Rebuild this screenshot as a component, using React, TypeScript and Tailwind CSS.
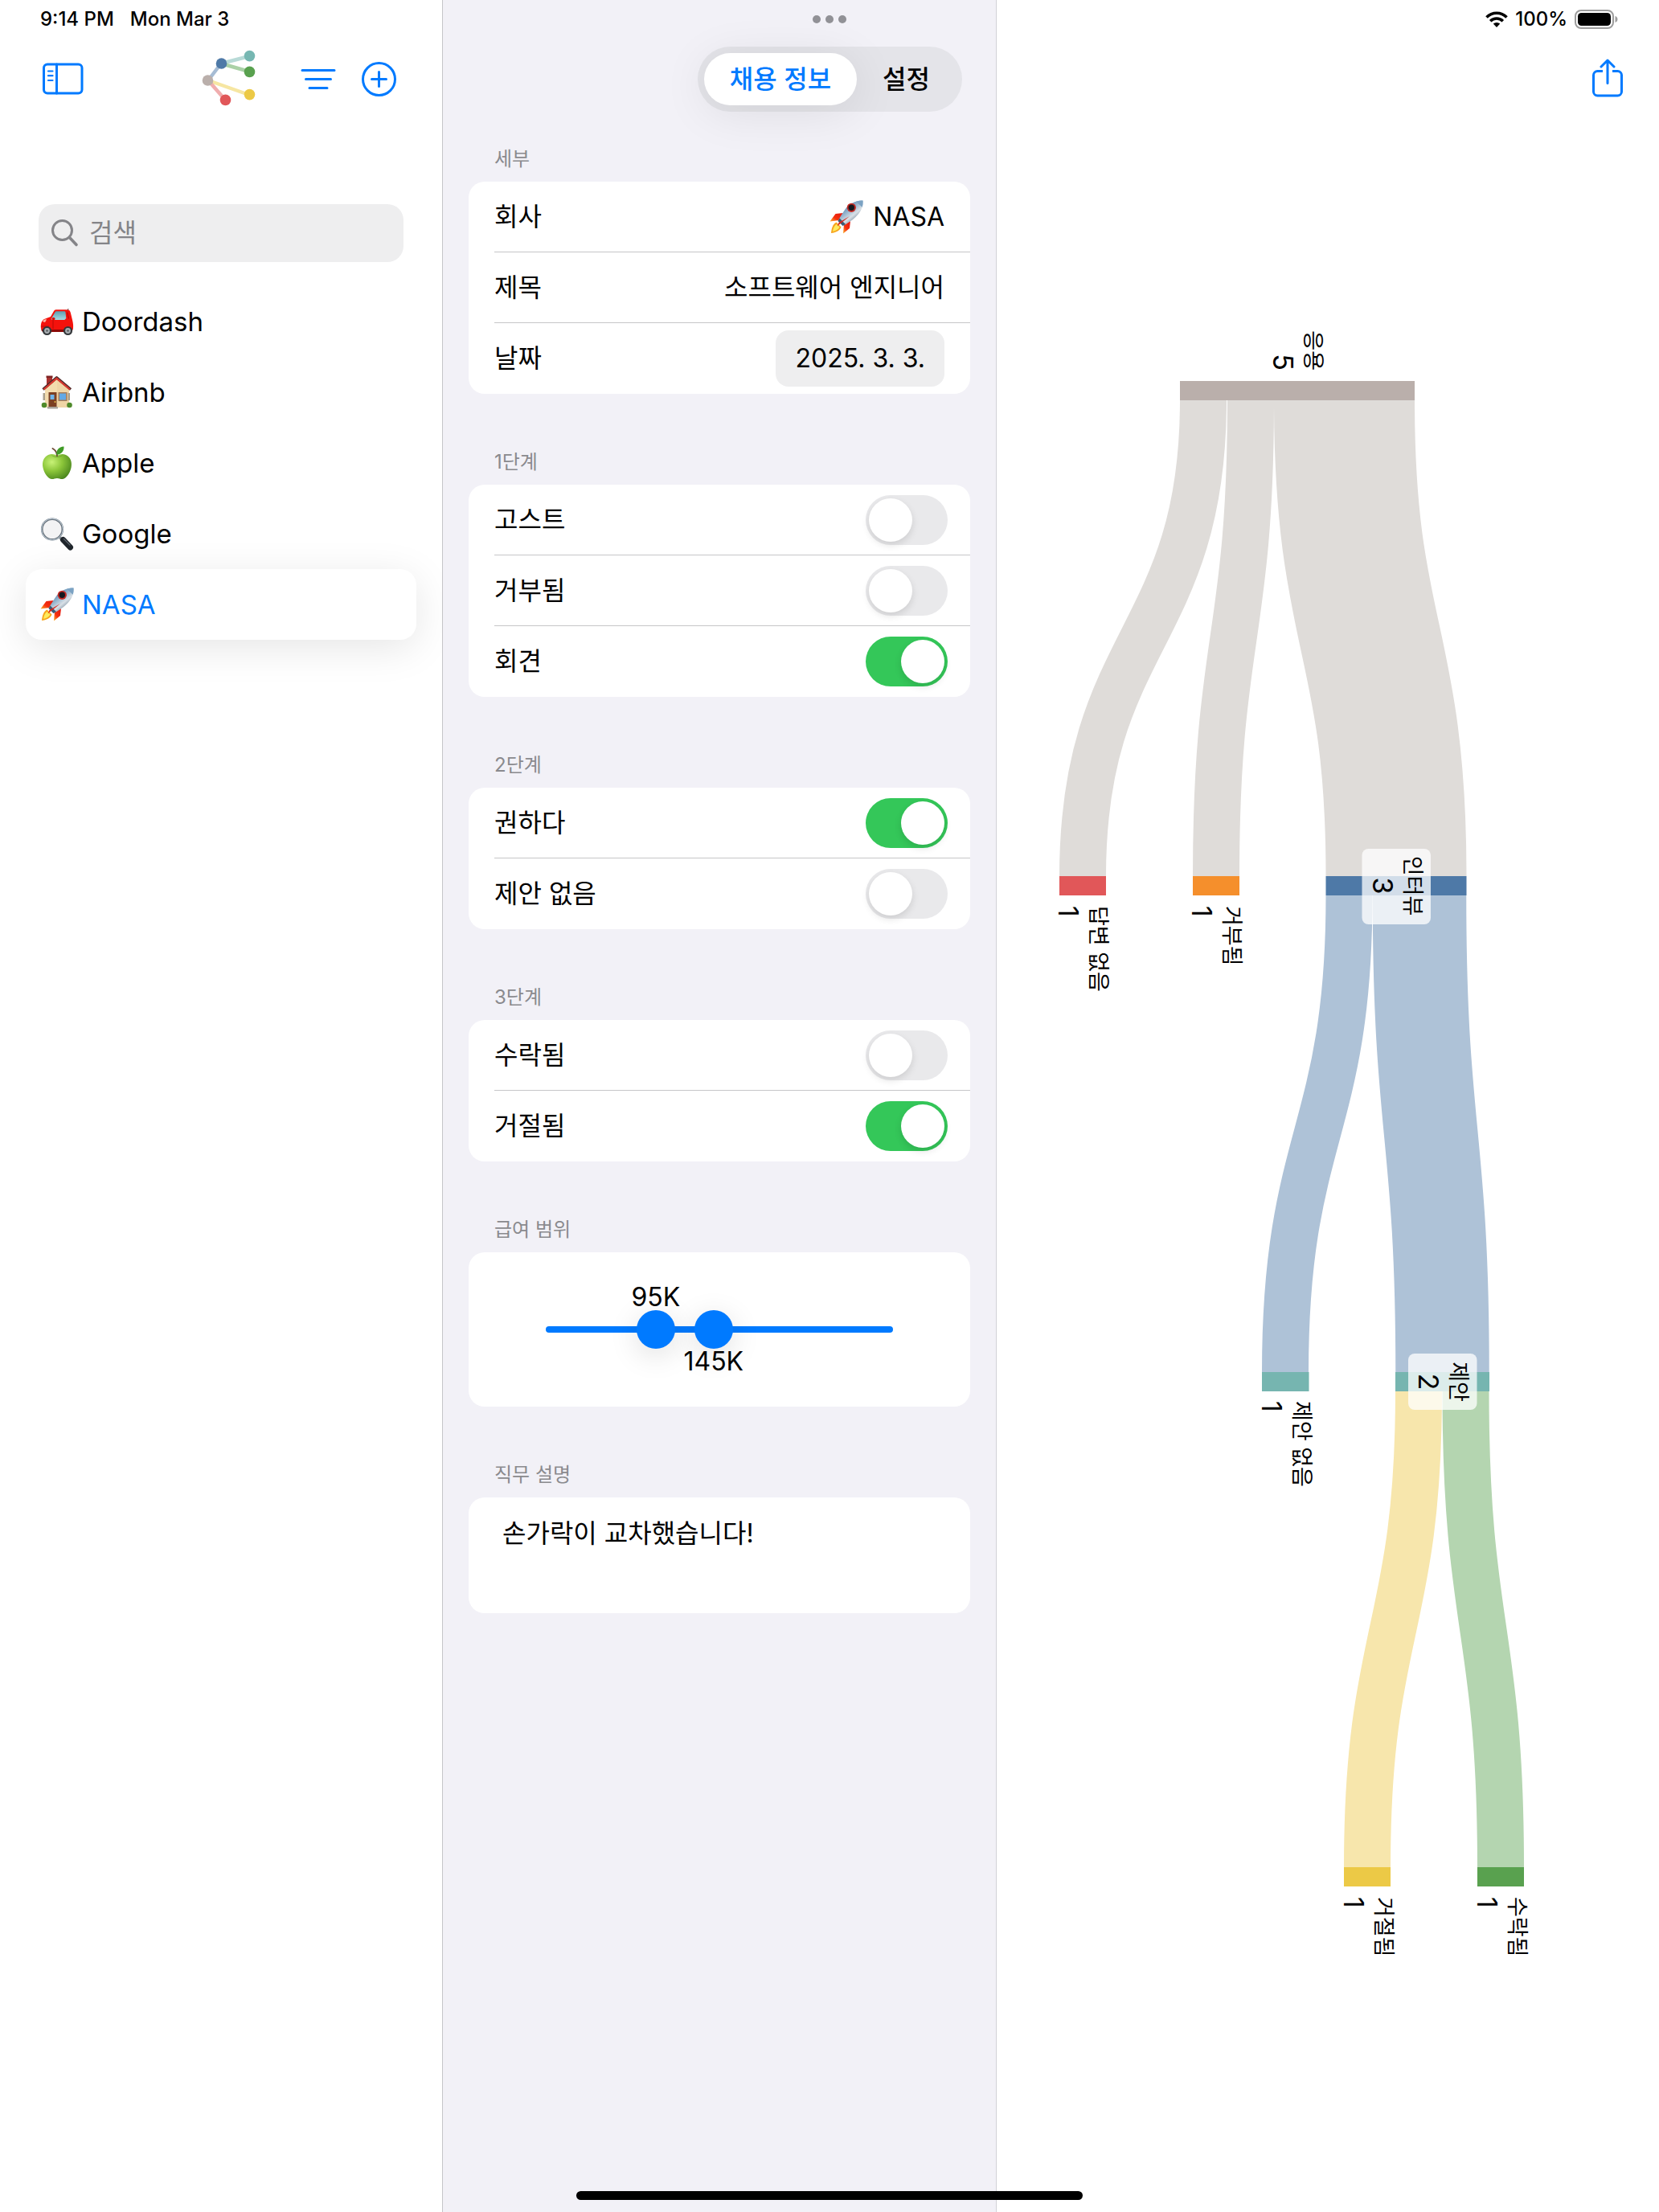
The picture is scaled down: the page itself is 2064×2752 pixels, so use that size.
import React, { useState } from "react";

type IconProps = { className?: string };

function CarIcon({ className }: IconProps) {
  return (
    <svg viewBox="0 0 42 42" className={className} aria-hidden="true">
      <defs>
        <linearGradient id="carGlass" x1="0" y1="0" x2="0" y2="1">
          <stop offset="0" stopColor="#5f9fb0" />
          <stop offset="1" stopColor="#a5dbe4" />
        </linearGradient>
      </defs>
      <path d="M35 5l-1 3" stroke="#444" strokeWidth="1" />
      <path
        d="M1 30c-.6-6 .6-10 4-12l8-3 4-7c1-1.600 2-1.800 4-1.800h12c3 0 4 1 4.800 3.800l2.200 9c1 4 1.500 8 .8 12l-1.800 2H3z"
        fill="#f4120c"
      />
      <path d="M13.500 18l5-8.500c.6-1 1-1.200 2-1.200h9.500c1 0 1.300.5 1.500 1.500l.8 7.200-2 2H15z" fill="url(#carGlass)" />
      <path d="M33.500 9.500l2 8" stroke="#c20a06" strokeWidth="1.400" fill="none" />
      <path d="M3 21c1-2 3-3 5-2.500l-2 3.500z" fill="#f9b9a8" />
      <path d="M16 19v11M1 27h10" stroke="#b90b07" strokeWidth="1" fill="none" />
      <rect x="14.500" y="16" width="4" height="3" rx="1.500" fill="#d70d08" />
      <path d="M1 31h39l-2 3H3z" fill="#8d0907" />
      <circle cx="8.500" cy="32.500" r="5.600" fill="#33373a" />
      <circle cx="8.500" cy="32.500" r="3.400" fill="#a9aeb2" />
      <circle cx="8.500" cy="32.500" r="1.300" fill="#55595c" />
      <circle cx="34.500" cy="32.500" r="5.600" fill="#33373a" />
      <circle cx="34.500" cy="32.500" r="3.400" fill="#a9aeb2" />
      <circle cx="34.500" cy="32.500" r="1.300" fill="#55595c" />
    </svg>
  );
}

function HouseIcon({ className }: IconProps) {
  return (
    <svg viewBox="0 0 42 42" className={className} aria-hidden="true">
      <rect x="8" y="1" width="7" height="12" fill="#a83230" />
      <rect x="7.500" y="0.500" width="8" height="2.500" fill="#7c2322" />
      <path d="M6 16L21 3l15 13v24H6z" fill="#f3dcae" />
      <path d="M21 3l15 13v24H21z" fill="#ecd0a0" opacity=".6" />
      <path d="M3.500 17.500L20.500 2.800 38 17.500" fill="none" stroke="#4a2a2a" strokeWidth="3.400" strokeLinejoin="round" />
      <path d="M4.500 17.500L20.500 3.800 37 17.500" fill="none" stroke="#d8382f" strokeWidth="2.200" />
      <rect x="10.500" y="21" width="10" height="19" fill="#7b3f22" />
      <rect x="12.500" y="24" width="5" height="6" fill="#6db4ea" />
      <circle cx="18.500" cy="33" r="1" fill="#e8c04a" />
      <rect x="22.500" y="21" width="11" height="11" fill="#a67c58" />
      <rect x="24" y="22.500" width="8" height="8" fill="#62a9e6" />
      <rect x="3.500" y="22" width="2.500" height="9" fill="#a9a08e" />
      <rect x="34.500" y="22" width="2.500" height="9" fill="#a9a08e" />
      <rect x="9" y="39" width="13" height="2.500" fill="#a8a39b" />
      <circle cx="5" cy="37" r="3.300" fill="#4f8a2b" />
      <circle cx="36.500" cy="37" r="3.300" fill="#4f8a2b" />
    </svg>
  );
}

function AppleIcon({ className }: IconProps) {
  return (
    <svg viewBox="0 0 42 42" className={className} aria-hidden="true">
      <defs>
        <radialGradient id="appleSkin" cx=".32" cy=".32" r=".8">
          <stop offset="0" stopColor="#c8f277" />
          <stop offset=".45" stopColor="#8cc63a" />
          <stop offset="1" stopColor="#44801b" />
        </radialGradient>
      </defs>
      <path
        d="M21 12c3-2 7-3 11-1 6 3 8 9 6.500 16-1.500 7-6 13-10.500 14-2.500.5-4-1-7-1s-4.500 1.500-7 1C9.500 40 5 34 3.500 27 2 20 4 14 10 11c4-2 8-1 11 1z"
        fill="url(#appleSkin)"
      />
      <path d="M14 11c3 2.500 11 2.500 14 0-2 4-12 4-14 0z" fill="#5d9a24" opacity=".7" />
      <path d="M21 12c0-4-2-7-5.500-9" fill="none" stroke="#6d4a34" strokeWidth="2" strokeLinecap="round" />
      <path d="M20.500 11C19.500 5 23 1 29.500.5 30 6 26.500 10 20.500 11z" fill="#3f9b26" />
    </svg>
  );
}

function MagnifierIcon({ className }: IconProps) {
  return (
    <svg viewBox="0 0 42 42" className={className} aria-hidden="true">
      <path d="M24 25l4 4" stroke="#8f959b" strokeWidth="3.500" />
      <path d="M28.500 28.500l9 9.500" stroke="#20262c" strokeWidth="7" strokeLinecap="round" />
      <path d="M29.500 27.500l7.500 7.500" stroke="#5b646c" strokeWidth="1.300" strokeLinecap="round" />
      <circle cx="15" cy="15.500" r="12.800" fill="#f3f3f4" stroke="#6b757e" strokeWidth="2.600" />
      <circle cx="15" cy="15.500" r="13.400" fill="none" stroke="#c5d3df" strokeWidth="1" />
    </svg>
  );
}

function RocketIcon({ className }: IconProps) {
  return (
    <svg viewBox="0 0 42 42" className={className} aria-hidden="true">
      <defs>
        <linearGradient id="rocketBody" x1=".2" y1=".1" x2=".75" y2=".8">
          <stop offset="0" stopColor="#3f6f9c" />
          <stop offset=".4" stopColor="#8fb0cb" />
          <stop offset=".7" stopColor="#d9e0e6" />
          <stop offset="1" stopColor="#6c8397" />
        </linearGradient>
        <linearGradient id="rocketFin" x1="1" y1="0" x2="0" y2="1">
          <stop offset="0" stopColor="#e3170f" />
          <stop offset=".6" stopColor="#f5310f" />
          <stop offset="1" stopColor="#fdb932" />
        </linearGradient>
      </defs>
      <path d="M17 16L7.500 17 .5 26.500 12 25z" fill="url(#rocketFin)" />
      <path d="M26 26l-1 9-8 6.500L18 30z" fill="url(#rocketFin)" />
      <path d="M8.500 27.500C4 30 2.500 35 2 41c5.500-.5 11-3 12.500-7.500z" fill="#f7a51c" />
      <path d="M8.500 30C6 32 4.500 35 4 39c4-.8 7-2.500 8.500-5.500z" fill="#fdec5e" />
      <path d="M41.500.6C34 0 26 3.500 20.500 10 17 14.500 13.500 20.500 10.500 26l6 6c5.500-3 11.500-6.500 16-11C39 15 42.300 8 41.500.6z" fill="url(#rocketBody)" />
      <path d="M33 1.800C36 1 39 .5 41.500.6c.2 3 0 5.500-.8 8.200z" fill="#7ba2c3" />
      <path d="M12.500 22.500l7.500 7.500-3.500 2-6-6z" fill="#3c5a74" />
      <path d="M25 20L9.500 32.500l2-4.500z" fill="#d8261b" />
      <circle cx="27.300" cy="9.300" r="5.600" fill="#c32a24" />
      <circle cx="27.300" cy="9.300" r="3.700" fill="#14181f" />
    </svg>
  );
}

function SidebarIcon() {
  return (
    <svg viewBox="0 0 52 40" className="h-10 w-[52px]" fill="none" stroke="currentColor" strokeLinecap="round" aria-hidden="true">
      <rect x="2.500" y="2" width="47.500" height="36" rx="4.500" strokeWidth="3" />
      <path d="M18.500 2v36" strokeWidth="3" />
      <path d="M8 10.500h5.500M8 16.200h5.500M8 22h5.500" strokeWidth="2.200" />
    </svg>
  );
}

function AppLogo() {
  return (
    <svg viewBox="250 62 70 74" className="h-[74px] w-[70px]" role="img" aria-label="Logo">
      <g strokeWidth="4.500" strokeLinecap="round">
        <path d="M259 101L275 80" stroke="#a6bcd4" />
        <path d="M275 80L310 71" stroke="#b8dad7" />
        <path d="M275 80L310 90" stroke="#aad1a7" />
        <path d="M259 101L310 119" stroke="#f6e6a2" />
        <path d="M259 101L280 125" stroke="#f0adae" />
      </g>
      <circle cx="258.500" cy="101" r="6.800" fill="#baafab" />
      <circle cx="275.500" cy="80" r="6.800" fill="#4e79a7" />
      <circle cx="310.500" cy="70.600" r="6.800" fill="#76b7b2" />
      <circle cx="310.500" cy="90.400" r="6.800" fill="#59a14f" />
      <circle cx="310.500" cy="118.600" r="6.800" fill="#ecc946" />
      <circle cx="280.500" cy="125.400" r="6.800" fill="#e15759" />
    </svg>
  );
}

function FilterIcon() {
  return (
    <svg viewBox="0 0 46 46" className="size-[46px]" fill="none" stroke="currentColor" strokeWidth="3" strokeLinecap="round" aria-hidden="true">
      <path d="M4 12.500h40M8.500 23.500h31M13 34.500h22" />
    </svg>
  );
}

function PlusCircleIcon() {
  return (
    <svg viewBox="0 0 46 46" className="size-[46px]" fill="none" stroke="currentColor" strokeWidth="3" strokeLinecap="round" aria-hidden="true">
      <circle cx="23.500" cy="23.500" r="20" />
      <path d="M23.500 14.500v18M14.500 23.500h18" />
    </svg>
  );
}

function SearchIcon() {
  return (
    <svg viewBox="0 0 36 36" className="size-9 shrink-0 text-[#848488]" fill="none" stroke="currentColor" strokeWidth="3" strokeLinecap="round" aria-hidden="true">
      <circle cx="13.500" cy="14.500" r="12" />
      <path d="M22.500 23.500L31 32.500" strokeWidth="3.600" />
    </svg>
  );
}

function ShareIcon() {
  return (
    <svg viewBox="0 0 40 50" className="h-[50px] w-10" fill="none" stroke="currentColor" strokeWidth="3" strokeLinecap="round" strokeLinejoin="round" aria-hidden="true">
      <path d="M14 15.500H7.500a5 5 0 0 0-5 5V41a5 5 0 0 0 5 5h25a5 5 0 0 0 5-5V20.500a5 5 0 0 0-5-5H26" strokeLinecap="butt" />
      <path d="M20 30.500V2.500M12 10l8-8 8 8" />
    </svg>
  );
}

function WifiIcon() {
  return (
    <svg viewBox="0 0 28 20" className="h-5 w-7" fill="none" stroke="currentColor" strokeWidth="3.600" aria-hidden="true">
      <path d="M1.500 7.500a17.500 17.500 0 0 1 25 0" />
      <path d="M6.200 12.200a11 11 0 0 1 15.600 0" />
      <path d="M14 20l-4.200-4.400a6 6 0 0 1 8.400 0z" fill="currentColor" stroke="none" />
    </svg>
  );
}

function BatteryIcon() {
  return (
    <svg viewBox="0 0 54 24" className="h-6 w-[54px]" aria-hidden="true">
      <rect x="1" y="1" width="47" height="22" rx="7" fill="none" stroke="#9d9d9d" strokeWidth="2" />
      <rect x="4" y="4" width="41" height="16" rx="4.500" fill="#000" />
      <path d="M50.500 8v8c1.800-.6 3-2.200 3-4s-1.200-3.400-3-4z" fill="#9d9d9d" />
    </svg>
  );
}

const companies = [
  { name: "Doordash", Icon: CarIcon },
  { name: "Airbnb", Icon: HouseIcon },
  { name: "Apple", Icon: AppleIcon },
  { name: "Google", Icon: MagnifierIcon },
  { name: "NASA", Icon: RocketIcon },
];

function Sidebar() {
  return (
    <aside className="flex flex-col border-r border-[#c6c6c8]">
      <div className="flex h-12 items-center gap-5 pl-[50px] text-[24px] font-medium">
        <span>9:14 PM</span>
        <span>Mon Mar 3</span>
      </div>
      <header className="flex h-[100px] items-center pr-14 pl-[52px] text-[#007aff]">
        <button type="button" aria-label="Toggle sidebar">
          <SidebarIcon />
        </button>
        <div className="ml-[146px]">
          <AppLogo />
        </div>
        <button type="button" aria-label="Filter" className="ml-auto">
          <FilterIcon />
        </button>
        <button type="button" aria-label="Add" className="ml-[30px]">
          <PlusCircleIcon />
        </button>
      </header>
      <label className="mx-12 mt-[106px] flex h-[72px] items-center gap-[11px] rounded-[20px] bg-[#eeeeef] px-4">
        <SearchIcon />
        <input type="text" aria-label="검색" placeholder="검색" className="w-full bg-transparent outline-none placeholder:text-[#848488]" />
      </label>
      <nav className="mt-[30px] flex flex-col px-8 text-[33px]">
        {companies.map(({ name, Icon }) => {
          const selected = name === "NASA";
          return (
            <a
              key={name}
              href={"#" + name}
              className={
                selected
                  ? "flex h-22 items-center gap-2.5 rounded-[20px] bg-white pl-[18px] text-[#007aff] shadow-[0_10px_50px_rgba(0,0,0,0.1)]"
                  : "flex h-22 items-center gap-2.5 pl-[18px]"
              }
            >
              <Icon className="size-[42px]" />
              {name}
            </a>
          );
        })}
      </nav>
    </aside>
  );
}

function Section({ title, children }: { title: string; children: React.ReactNode }) {
  return (
    <section className="group">
      <h2 className="flex h-[113px] items-center px-8 pt-14 text-[24px] leading-8 text-[#8a8a8e] group-first:h-[87px] group-first:pt-[30px]">{title}</h2>
      <div className="rounded-[20px] bg-white">{children}</div>
    </section>
  );
}

function Row({ label, id, children }: { label: string; id: string; children: React.ReactNode }) {
  return (
    <div className="group/row pl-8">
      <div className="flex h-22 items-center justify-between border-b border-[#c6c6c8] pr-8 group-last/row:border-b-0">
        <label htmlFor={id}>{label}</label>
        {children}
      </div>
    </div>
  );
}

function ToggleRow({ label, id, on }: { label: string; id: string; on: boolean }) {
  const [checked, setChecked] = useState(on);
  return (
    <Row label={label} id={id}>
      <input
        id={id}
        type="checkbox"
        role="switch"
        checked={checked}
        onChange={(e) => setChecked(e.target.checked)}
        className="-mr-1 flex h-[62px] w-[102px] appearance-none items-center rounded-full bg-[#e9e9eb] p-1 before:size-[54px] before:rounded-full before:bg-white before:shadow-[0_4px_10px_rgba(0,0,0,0.12)] checked:justify-end checked:bg-[#34c759]"
      />
    </Row>
  );
}

const thumbClass =
  "pointer-events-none absolute inset-x-0 top-1/2 h-12 w-full -translate-y-1/2 appearance-none bg-transparent [&::-webkit-slider-thumb]:pointer-events-auto [&::-webkit-slider-thumb]:size-12 [&::-webkit-slider-thumb]:appearance-none [&::-webkit-slider-thumb]:rounded-full [&::-webkit-slider-thumb]:bg-[#007aff] [&::-webkit-slider-thumb]:shadow-[0_8px_36px_rgba(0,0,0,0.13)]";

function SalaryRange() {
  const [low, setLow] = useState(95);
  const [high, setHigh] = useState(145);
  return (
    <div className="p-[72px]">
      <div className="relative h-12">
        <div className="absolute inset-x-6 top-5 h-2 rounded-full bg-[#007aff]" />
        <input type="range" min={0} max={300} value={low} onChange={(e) => setLow(Number(e.target.value))} aria-label="최소 급여" className={thumbClass} />
        <input type="range" min={0} max={300} value={high} onChange={(e) => setHigh(Number(e.target.value))} aria-label="최대 급여" className={thumbClass} />
        <div className="pointer-events-none absolute inset-x-6 inset-y-0">
          <output className="absolute bottom-full -translate-x-1/2 leading-8" style={{ left: (low / 300) * 100 + "%" }}>
            {low}K
          </output>
          <output className="absolute top-full -translate-x-1/2 leading-8" style={{ left: (high / 300) * 100 + "%" }}>
            {high}K
          </output>
        </div>
      </div>
    </div>
  );
}

function DetailForm() {
  return (
    <main className="flex flex-col border-r border-[#d1d1d6] bg-[#f2f1f7]">
      <header className="flex justify-end pt-[58px] pr-[42px]">
        <div role="tablist" className="flex h-[81px] items-center rounded-full bg-[#e4e4e9] p-2 font-medium">
          <button type="button" role="tab" aria-selected="true" className="h-full rounded-full bg-white px-8 text-[#007aff] shadow-[0_8px_60px_rgba(0,0,0,0.09)]">
            채용 정보
          </button>
          <button type="button" role="tab" aria-selected="false" className="h-full px-8">
            설정
          </button>
        </div>
      </header>
      <div className="px-8">
        <Section title="세부">
          <Row label="회사" id="company">
            <span className="flex items-center gap-3">
              <RocketIcon className="size-[42px]" />
              <input id="company" type="text" defaultValue="NASA" className="field-sizing-content bg-transparent text-right outline-none" />
            </span>
          </Row>
          <Row label="제목" id="title">
            <input id="title" type="text" defaultValue="소프트웨어 엔지니어" className="w-[400px] bg-transparent text-right outline-none" />
          </Row>
          <Row label="날짜" id="date">
            <button id="date" type="button" className="h-[70px] rounded-2xl bg-[#eeeeef] px-6">
              2025. 3. 3.
            </button>
          </Row>
        </Section>
        <Section title="1단계">
          <ToggleRow id="ghosted" label="고스트" on={false} />
          <ToggleRow id="rejected" label="거부됨" on={false} />
          <ToggleRow id="interview" label="회견" on />
        </Section>
        <Section title="2단계">
          <ToggleRow id="offer" label="권하다" on />
          <ToggleRow id="no-offer" label="제안 없음" on={false} />
        </Section>
        <Section title="3단계">
          <ToggleRow id="accepted" label="수락됨" on={false} />
          <ToggleRow id="declined" label="거절됨" on />
        </Section>
        <Section title="급여 범위">
          <SalaryRange />
        </Section>
        <Section title="직무 설명">
          <textarea aria-label="직무 설명" defaultValue="손가락이 교차했습니다!" className="block h-36 w-full resize-none bg-transparent px-[42px] pt-[21px] leading-12 outline-none" />
        </Section>
      </div>
    </main>
  );
}

const links = [
  { x0: 1497, y0: 498, x1: 1347, y1: 1090, w: 58, color: "#dfdcd9" },
  { x0: 1556, y0: 498, x1: 1513, y1: 1090, w: 58, color: "#dfdcd9" },
  { x0: 1672.500, y0: 498, x1: 1737, y1: 1090, w: 175, color: "#dfdcd9" },
  { x0: 1678.500, y0: 1114, x1: 1599, y1: 1707, w: 58, color: "#aec2d7" },
  { x0: 1766, y0: 1114, x1: 1794.500, y1: 1707, w: 116.500, color: "#aec2d7" },
  { x0: 1765, y0: 1731, x1: 1701, y1: 2323, w: 58, color: "#f7e6ac" },
  { x0: 1823.500, y0: 1731, x1: 1867, y1: 2323, w: 58, color: "#b4d5b0" },
];

const nodes = [
  { x: 1468, y: 474, w: 292, color: "#baafab" },
  { x: 1318, y: 1090, w: 58, color: "#e15759" },
  { x: 1484, y: 1090, w: 58, color: "#f58f2c" },
  { x: 1649.500, y: 1090, w: 175, color: "#4e79a7" },
  { x: 1570, y: 1707, w: 58.500, color: "#76b5b0" },
  { x: 1736, y: 1707, w: 117, color: "#76b5b0" },
  { x: 1672, y: 2323, w: 58, color: "#ecc946" },
  { x: 1838, y: 2323, w: 58, color: "#59a14f" },
];

const labels: { x: number; y: number; text: string; count: number; anchor: "start" | "middle" | "end" }[] = [
  { x: 1584, y: 461, text: "응용", count: 5, anchor: "end" },
  { x: 1317, y: 1127, text: "답변 없음", count: 1, anchor: "start" },
  { x: 1483, y: 1127, text: "거부됨", count: 1, anchor: "start" },
  { x: 1708, y: 1102, text: "인터뷰", count: 3, anchor: "middle" },
  { x: 1570, y: 1743, text: "제안 없음", count: 1, anchor: "start" },
  { x: 1765, y: 1719, text: "제안", count: 2, anchor: "middle" },
  { x: 1672, y: 2360, text: "거절됨", count: 1, anchor: "start" },
  { x: 1838, y: 2360, text: "수락됨", count: 1, anchor: "start" },
];

function FlowChart() {
  return (
    <svg viewBox="1240 400 824 2050" className="w-full" role="img" aria-label="응용 흐름">
      {links.map((l, i) => {
        const mid = (l.y0 + l.y1) / 2;
        return (
          <path key={i} d={`M${l.x0} ${l.y0}C${l.x0} ${mid} ${l.x1} ${mid} ${l.x1} ${l.y1}`} fill="none" stroke={l.color} strokeWidth={l.w} />
        );
      })}
      {nodes.map((n, i) => (
        <rect key={i} x={n.x} y={n.y} width={n.w} height={24} fill={n.color} />
      ))}
      <rect x="1694.500" y="1056" width="85.500" height="94" rx="8" fill="#fff" fillOpacity=".75" />
      <rect x="1752" y="1684" width="85.500" height="70" rx="8" fill="#fff" fillOpacity=".75" />
      {labels.map((l) => (
        <g key={l.text + l.x} textAnchor={l.anchor}>
          <text transform={`translate(${l.x + 40} ${l.y}) rotate(90)`} fontSize="27">
            {l.text}
          </text>
          <text transform={`translate(${l.x} ${l.y}) rotate(90)`} fontSize="34">
            {l.count}
          </text>
        </g>
      ))}
    </svg>
  );
}

function ChartPanel() {
  return (
    <section className="flex min-w-0 flex-col">
      <div className="flex h-12 items-center justify-end gap-[9px] pr-[51px] text-[24px] font-medium">
        <WifiIcon />
        <span>100%</span>
        <BatteryIcon />
      </div>
      <header className="flex h-[100px] items-center justify-end pr-11 text-[#007aff]">
        <button type="button" aria-label="Share">
          <ShareIcon />
        </button>
      </header>
      <div className="mt-[252px]">
        <FlowChart />
      </div>
    </section>
  );
}

export default function App() {
  return (
    <div className="relative grid min-h-screen grid-cols-[551px_689px_minmax(0,1fr)] bg-white text-[32px] leading-10 text-black [font-family:Inter,'Noto_Sans_CJK_KR',sans-serif]">
      <Sidebar />
      <DetailForm />
      <ChartPanel />
      <div className="absolute top-[19px] left-1/2 flex -translate-x-1/2 gap-1.5" aria-hidden="true">
        <span className="size-2.5 rounded-full bg-[#919196]" />
        <span className="size-2.5 rounded-full bg-[#919196]" />
        <span className="size-2.5 rounded-full bg-[#919196]" />
      </div>
      <div className="absolute bottom-[15px] left-1/2 h-[11px] w-[630px] -translate-x-1/2 rounded-full bg-black" />
    </div>
  );
}
